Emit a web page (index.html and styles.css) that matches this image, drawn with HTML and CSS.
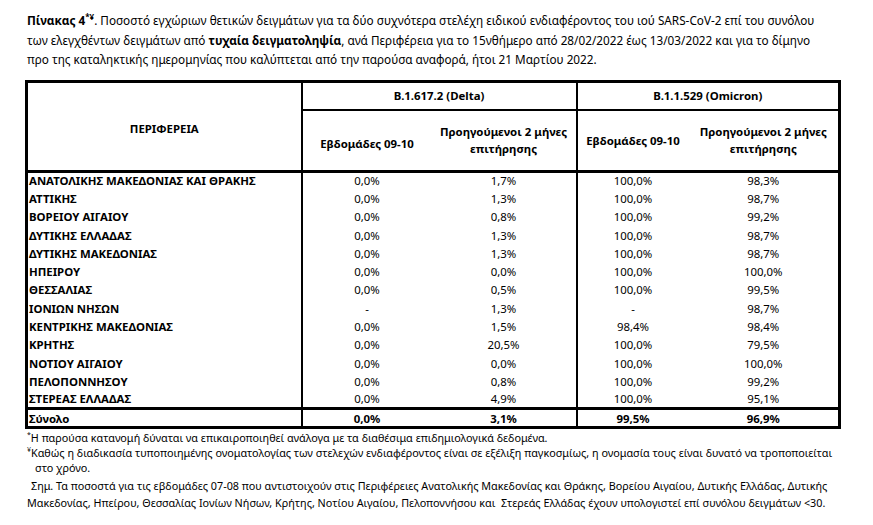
FILE: index.html
```html
<!DOCTYPE html>
<html lang="el">
<head>
<meta charset="utf-8">
<title>Πίνακας 4</title>
<link rel="stylesheet" href="styles.css">
</head>
<body>
<div class="page">
  <p class="title"><span class="line"><b>Πίνακας 4<sup>*¥</sup></b>. Ποσοστό εγχώριων θετικών δειγμάτων για τα δύο συχνότερα στελέχη ειδικού ενδιαφέροντος του ιού SARS-CoV-2 επί του συνόλου</span><span class="line">των ελεγχθέντων δειγμάτων από <b>τυχαία δειγματοληψία</b>, ανά Περιφέρεια για το 15νθήμερο από 28/02/2022 έως 13/03/2022 και για το δίμηνο</span><span class="line">προ της καταληκτικής ημερομηνίας που καλύπτεται από την παρούσα αναφορά, ήτοι 21 Μαρτίου 2022.</span></p>

  <table class="data">
    <colgroup>
      <col class="c-region">
      <col class="c-d1">
      <col class="c-d2">
      <col class="c-o1">
      <col class="c-o2">
    </colgroup>
    <thead>
      <tr class="h1">
        <th rowspan="2" class="region-head">ΠΕΡΙΦΕΡΕΙΑ</th>
        <th colspan="2" class="group">B.1.617.2 (Delta)</th>
        <th colspan="2" class="group">B.1.1.529 (Omicron)</th>
      </tr>
      <tr class="h2">
        <th class="sub low">Εβδομάδες 09-10</th>
        <th class="sub">Προηγούμενοι 2 μήνες<br>επιτήρησης</th>
        <th class="sub group-start">Εβδομάδες 09-10</th>
        <th class="sub">Προηγούμενοι 2 μήνες<br>επιτήρησης</th>
      </tr>
    </thead>
    <tbody>
      <tr><th>ΑΝΑΤΟΛΙΚΗΣ ΜΑΚΕΔΟΝΙΑΣ ΚΑΙ ΘΡΑΚΗΣ</th><td>0,0%</td><td>1,7%</td><td class="group-start">100,0%</td><td>98,3%</td></tr>
      <tr><th>ΑΤΤΙΚΗΣ</th><td>0,0%</td><td>1,3%</td><td class="group-start">100,0%</td><td>98,7%</td></tr>
      <tr><th>ΒΟΡΕΙΟΥ ΑΙΓΑΙΟΥ</th><td>0,0%</td><td>0,8%</td><td class="group-start">100,0%</td><td>99,2%</td></tr>
      <tr><th>ΔΥΤΙΚΗΣ ΕΛΛΑΔΑΣ</th><td>0,0%</td><td>1,3%</td><td class="group-start">100,0%</td><td>98,7%</td></tr>
      <tr><th>ΔΥΤΙΚΗΣ ΜΑΚΕΔΟΝΙΑΣ</th><td>0,0%</td><td>1,3%</td><td class="group-start">100,0%</td><td>98,7%</td></tr>
      <tr><th>ΗΠΕΙΡΟΥ</th><td>0,0%</td><td>0,0%</td><td class="group-start">100,0%</td><td>100,0%</td></tr>
      <tr><th>ΘΕΣΣΑΛΙΑΣ</th><td>0,0%</td><td>0,5%</td><td class="group-start">100,0%</td><td>99,5%</td></tr>
      <tr><th>ΙΟΝΙΩΝ ΝΗΣΩΝ</th><td>-</td><td>1,3%</td><td class="group-start">-</td><td>98,7%</td></tr>
      <tr><th>ΚΕΝΤΡΙΚΗΣ ΜΑΚΕΔΟΝΙΑΣ</th><td>0,0%</td><td>1,5%</td><td class="group-start">98,4%</td><td>98,4%</td></tr>
      <tr><th>ΚΡΗΤΗΣ</th><td>0,0%</td><td>20,5%</td><td class="group-start">100,0%</td><td>79,5%</td></tr>
      <tr><th>ΝΟΤΙΟΥ ΑΙΓΑΙΟΥ</th><td>0,0%</td><td>0,0%</td><td class="group-start">100,0%</td><td>100,0%</td></tr>
      <tr><th>ΠΕΛΟΠΟΝΝΗΣΟΥ</th><td>0,0%</td><td>0,8%</td><td class="group-start">100,0%</td><td>99,2%</td></tr>
      <tr><th>ΣΤΕΡΕΑΣ ΕΛΛΑΔΑΣ</th><td>0,0%</td><td>4,9%</td><td class="group-start">100,0%</td><td>95,1%</td></tr>
    </tbody>
    <tfoot>
      <tr><th>Σύνολο</th><td>0,0%</td><td>3,1%</td><td class="group-start">99,5%</td><td>96,9%</td></tr>
    </tfoot>
  </table>

  <div class="notes">
    <p class="note"><sup>*</sup>Η παρούσα κατανομή δύναται να επικαιροποιηθεί ανάλογα με τα διαθέσιμα επιδημιολογικά δεδομένα.</p>
    <p class="note"><sup>¥</sup>Καθώς η διαδικασία τυποποιημένης ονοματολογίας των στελεχών ενδιαφέροντος είναι σε εξέλιξη παγκοσμίως, η ονομασία τους είναι δυνατό να τροποποιείται<span class="line indent">στο χρόνο.</span></p>
    <p class="note remark"><span class="line first">Σημ. Τα ποσοστά για τις εβδομάδες 07-08 που αντιστοιχούν στις Περιφέρειες Ανατολικής Μακεδονίας και Θράκης, Βορείου Αιγαίου, Δυτικής Ελλάδας, Δυτικής</span><span class="line">Μακεδονίας, Ηπείρου, Θεσσαλίας Ιονίων Νήσων, Κρήτης, Νοτίου Αιγαίου, Πελοποννήσου και&nbsp; Στερεάς Ελλάδας έχουν υπολογιστεί επί συνόλου δειγμάτων &lt;30.</span></p>
  </div>
</div>
</body>
</html>
```

FILE: styles.css
```css
html, body {
  margin: 0;
  padding: 0;
  background: #ffffff;
}

body {
  font-family: "Noto Sans", "Open Sans", sans-serif;
  color: #000000;
}

.page {
  padding: 11px 0 0 27px;
  width: 830px;
}

.title {
  margin: 0;
  font-size: 11.75px;
  line-height: 19.5px;
  white-space: nowrap;
}

.title .line {
  display: block;
}

.title sup {
  font-size: 8px;
  line-height: 0;
}

.data {
  margin: 10px 0 0 -2px;
  border-collapse: collapse;
  table-layout: fixed;
  width: 816px;
  border: 3px solid #000;
  font-size: 11.4px;
}

.c-region { width: 275px; }
.c-d1 { width: 130px; }
.c-d2 { width: 145px; }
.c-o1 { width: 112px; }
.c-o2 { width: 151px; }

.data th,
.data td {
  padding: 0;
  text-align: center;
  white-space: nowrap;
  font-weight: normal;
  line-height: 15px;
}

.data thead th {
  font-weight: bold;
  border-right: 2px solid #000;
}

.data .h1 {
  height: 29px;
}

.data .h1 .group {
  border-bottom: 2px solid #000;
}

.data .h2 {
  height: 61px;
}

.data .h2 .sub {
  border-right: none;
  line-height: 17px;
}

.data .h2 .sub.low {
  vertical-align: bottom;
  padding-bottom: 18px;
}

.data .h2 .sub:nth-child(2),
.data .h2 .sub:nth-child(4) {
  border-right: 2px solid #000;
}

.data .region-head {
  border-bottom: 3px solid #000;
  padding-top: 4px;
}

.data .h2 th {
  border-bottom: 3px solid #000;
}

.data tbody tr {
  height: 18.3px;
}

.data tbody th,
.data tfoot th {
  text-align: left;
  font-weight: bold;
  border-right: 2px solid #000;
  padding-left: 1px;
}

.data .group-start {
  border-left: 2px solid #000;
}

.data tfoot tr {
  height: 19px;
  border-top: 3px solid #000;
}

.data tfoot td,
.data tfoot th {
  font-weight: bold;
}

.notes {
  margin-top: 1px;
  font-size: 10.8px;
  white-space: nowrap;
}

.note {
  margin: 0;
  line-height: 15px;
}

.note sup {
  font-size: 7px;
  line-height: 0;
}

.note .line {
  display: block;
}

.note .indent {
  padding-left: 8px;
}

.remark {
  margin-top: 2px;
  line-height: 17px;
}

.remark .first {
  padding-left: 4px;
}
```
